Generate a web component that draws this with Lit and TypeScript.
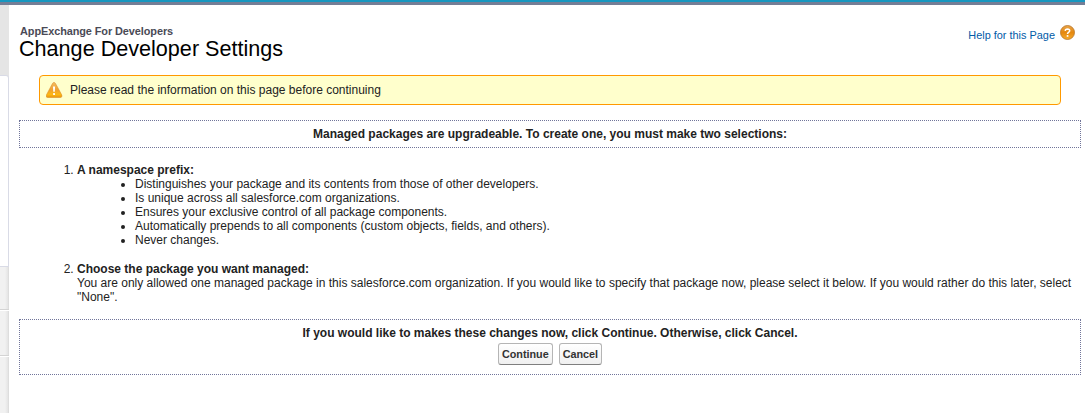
import { LitElement, html, css } from "lit";
import { customElement } from "lit/decorators.js";

const warningIcon = html`<svg class="warn" viewBox="0 0 17 16" width="17" height="16" aria-hidden="true">
  <defs><linearGradient id="w" x1="0" y1="0" x2="0" y2="1">
    <stop offset="0" stop-color="#f3bd62"></stop><stop offset=".5" stop-color="#f0a030"></stop><stop offset=".8" stop-color="#fdb813"></stop><stop offset="1" stop-color="#e8950f"></stop>
  </linearGradient></defs>
  <path d="M8 .5 Q9 .5 9.5 1.5 L15.8 13 Q16.5 15.4 14.5 15.5 H1.6 Q-.4 15.4 .4 13 L6.5 1.5 Q7 .5 8 .5Z" fill="url(#w)" stroke="#dc8f2a" stroke-width=".6"></path>
  <path d="M7 4.4 H9.1 L8.8 9.8 H7.3Z" fill="#fff"></path>
  <rect x="7.1" y="11" width="1.9" height="2" rx=".5" fill="#fff"></rect>
</svg>`;

const helpIcon = html`<svg class="q" viewBox="0 0 16 16" width="16" height="16" aria-hidden="true">
  <defs><linearGradient id="h" x1="0" y1="0" x2="0" y2="1">
    <stop offset="0" stop-color="#e9a549"></stop><stop offset=".5" stop-color="#e5880f"></stop><stop offset="1" stop-color="#f7ab2a"></stop>
  </linearGradient></defs>
  <circle cx="7.5" cy="7.5" r="7" fill="url(#h)" stroke="#b5742a" stroke-width=".8"></circle>
  <path d="M5.2 5.9 Q5.3 3.9 7.5 3.9 Q9.7 4 9.7 5.7 Q9.7 6.7 8.5 7.4 Q7.5 8 7.5 9.1" fill="none" stroke="#fff" stroke-width="1.5"></path>
  <rect x="6.7" y="10.1" width="1.7" height="1.7" fill="#fff"></rect>
</svg>`;

@customElement("app-root")
export class AppRoot extends LitElement {
  static styles = css`
    :host {
      display: flex; flex-direction: column; box-sizing: border-box;
      height: 413px; overflow: hidden; background: #fff;
      border-top: 2px solid #1797c0;
      font: 12px/14px "Liberation Sans", Arial, sans-serif; color: #222;
    }
    .rule { height: 3px; background: #747e96; flex: none; }
    .page { display: flex; flex: 1; min-height: 0; }
    .side {
      width: 9px; flex: none; display: flex; flex-direction: column;
      background: linear-gradient(#e5e5e5 72px, #fff 72px);
    }
    .panel {
      margin-top: 70px; height: 192px; box-sizing: border-box; flex: none; background: #fff;
      border: 1px solid #d9dbe6; border-left: 0; border-radius: 0 3px 0 0;
    }
    .cell {
      box-sizing: border-box; flex: none;
      background: linear-gradient(to right, #f1f1f1 5px, #e4e4e4 8px, #d6d6d6 9px);
      border-bottom: 1px solid #d4d4d4; margin-bottom: 1px;
    }
    .c1 { height: 43px; }
    .c2 { height: 45px; }
    .c3 { height: 60px; }
    .main { flex: 1; min-width: 0; padding: 20px 4px 0 10px; }
    header { display: flex; justify-content: space-between; height: 50px; }
    h1, h2 { margin: 0; }
    h2 { font-size: 10.92px; line-height: 13px; color: #4a4a56; padding-left: 1px; letter-spacing: -0.08px; }
    h1 { font-size: 21.6px; line-height: 22px; font-weight: normal; color: #000; }
    .help { display: flex; align-items: flex-start; color: #015ba7; font-size: 10.92px; padding-right: 5px; }
    .help span { padding: 3px 5px 0 0; }
    .message {
      margin: 0 20px 15px; height: 30px; box-sizing: border-box; display: flex; align-items: center;
      border: 1px solid #f90; border-radius: 4px; background: #ffc; padding-left: 6px; gap: 7px;
    }
    .box { border: 1px dotted #71759a; box-sizing: border-box; text-align: center; font-weight: bold; }
    .intro { height: 28px; padding-top: 6px; }
    ol { margin: 15px 0 0; padding-left: 58px; }
    ol > li { margin-bottom: 15px; }
    ul { margin: 0; padding-left: 58px; list-style: disc; }
    .confirm { height: 56px; padding-top: 6px; }
    .actions { display: flex; justify-content: center; gap: 6px; margin-top: 3px; }
    button {
      font: bold 10.8px/14px "Liberation Sans", Arial, sans-serif; color: #333; height: 22px; padding: 2px 3px;
      border: 1px solid #b5b5b5; border-bottom-color: #7f7f7f; border-radius: 3px;
      background: linear-gradient(#fff, #f0f0f0);
    }
  `;

  private features = [
    "Distinguishes your package and its contents from those of other developers.",
    "Is unique across all salesforce.com organizations.",
    "Ensures your exclusive control of all package components.",
    "Automatically prepends to all components (custom objects, fields, and others).",
    "Never changes.",
  ];

  render() {
    return html`
      <div class="rule"></div>
      <div class="page">
        <div class="side">
          <div class="panel"></div>
          <div class="cell c1"></div><div class="cell c2"></div><div class="cell c3"></div>
        </div>
        <div class="main">
          <header>
            <div><h2>AppExchange For Developers</h2><h1>Change Developer Settings</h1></div>
            <a class="help"><span>Help for this Page</span>${helpIcon}</a>
          </header>
          <div class="message">${warningIcon}<span>Please read the information on this page before continuing</span></div>
          <div class="box intro">Managed packages are upgradeable. To create one, you must make two selections:</div>
          <ol>
            <li><b>A namespace prefix:</b><ul>${this.features.map((f) => html`<li>${f}</li>`)}</ul></li>
            <li><b>Choose the package you want managed:</b><br />You are only allowed one managed package in this salesforce.com organization. If you would like to specify that package now, please select it below. If you would rather do this later, select "None".</li>
          </ol>
          <div class="box confirm">
            If you would like to makes these changes now, click Continue. Otherwise, click Cancel.
            <div class="actions"><button>Continue</button><button>Cancel</button></div>
          </div>
        </div>
      </div>
    `;
  }
}
